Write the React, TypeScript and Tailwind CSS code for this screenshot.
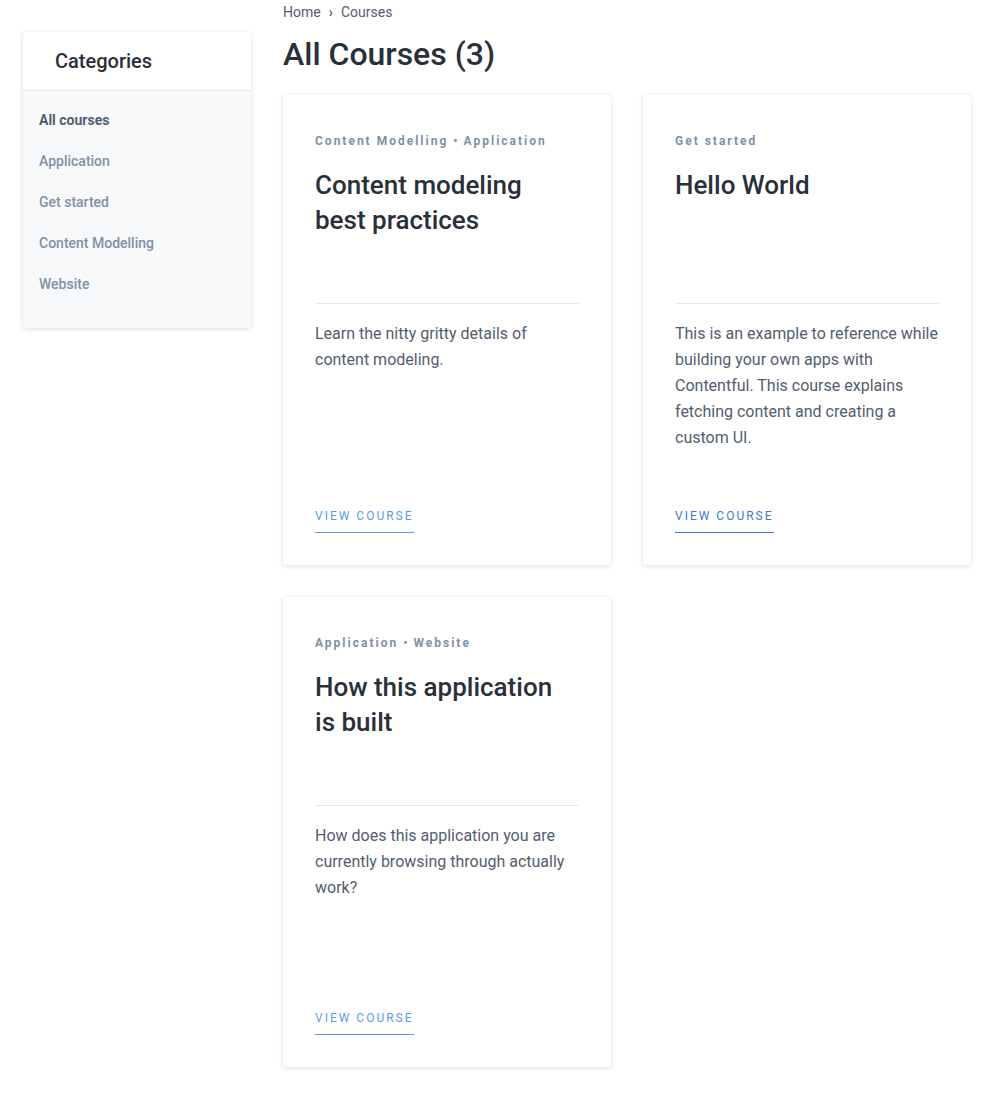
import React from 'react';

type Course = { tags: string[]; title: string; text: string; linkClass: string };

const courses: Course[] = [
  {
    tags: ['Content Modelling', 'Application'],
    title: 'Content modeling best practices',
    text: 'Learn the nitty gritty details of content modeling.',
    linkClass: 'text-[#5b9bec] border-[#5b9bec]',
  },
  {
    tags: ['Get started'],
    title: 'Hello World',
    text: 'This is an example to reference while building your own apps with Contentful. This course explains fetching content and creating a custom UI.',
    linkClass: 'text-[#3c79d3] border-[#3c79d3]',
  },
  {
    tags: ['Application', 'Website'],
    title: 'How this application is built',
    text: 'How does this application you are currently browsing through actually work?',
    linkClass: 'text-[#5b9bec] border-[#5b9bec]',
  },
];

const categories = ['All courses', 'Application', 'Get started', 'Content Modelling', 'Website'];

function CourseCard({ course }: { course: Course }) {
  return (
    <article className="flex min-h-[470px] flex-col items-start rounded-[4px] bg-white p-8 shadow-[0_1px_4px_1px_rgba(0,0,0,0.1)]">
      <div className="mt-1 flex text-xs leading-5 font-bold tracking-[2px] text-[#8091a5]">
        {course.tags.map((tag, i) => (
          <React.Fragment key={tag}>
            {i > 0 && <span className="mr-1 ml-[5px]">•</span>}
            <a href="#">{tag}</a>
          </React.Fragment>
        ))}
      </div>
      <h2 className="mt-[17px] min-h-[135px] pr-6 text-[26px] leading-[35px] font-medium text-[#2a3039]">
        <a href="#">{course.title}</a>
      </h2>
      <p className="w-full border-t border-[#e8e8e8] pt-[17px] text-base leading-[26px] text-[#535d70]">{course.text}</p>
      <a
        href="#"
        className={`mt-auto border-b pb-[7px] text-xs leading-[18px] tracking-[2px] uppercase ${course.linkClass}`}
      >
        View course
      </a>
    </article>
  );
}

export default function App() {
  return (
    <div className="flex items-start gap-8 bg-white px-[23px] pb-8 font-[Roboto,sans-serif]">
      <aside className="mt-8 w-[228px] shrink-0 overflow-hidden rounded-[4px] bg-[#f7f9fb] shadow-[0_1px_4px_1px_rgba(0,0,0,0.1)]">
        <h2 className="border-b border-[#e8e8e8] bg-white px-8 py-4 text-xl leading-[26px] font-medium text-[#2a3039]">
          Categories
        </h2>
        <nav className="flex flex-col gap-[17px] px-4 pt-[17px] pb-8 text-sm leading-6 font-medium text-[#8091a5]">
          {categories.map((name, i) => (
            <a key={name} href="#" className={i === 0 ? 'font-bold text-[#535d70]' : ''}>
              {name}
            </a>
          ))}
        </nav>
      </aside>
      <main className="min-w-0 flex-1">
        <nav aria-label="Breadcrumb" className="flex gap-2 text-sm leading-6 text-[#535d70]">
          <a href="#">Home</a>
          <span className="font-bold">›</span>
          <a href="#">Courses</a>
        </nav>
        <h1 className="mt-2 text-[32px] leading-[44px] font-medium text-[#2a3039]">All Courses (3)</h1>
        <div className="mt-[19px] grid grid-cols-2 gap-8">
          {courses.map((course) => (
            <CourseCard key={course.title} course={course} />
          ))}
        </div>
      </main>
    </div>
  );
}
